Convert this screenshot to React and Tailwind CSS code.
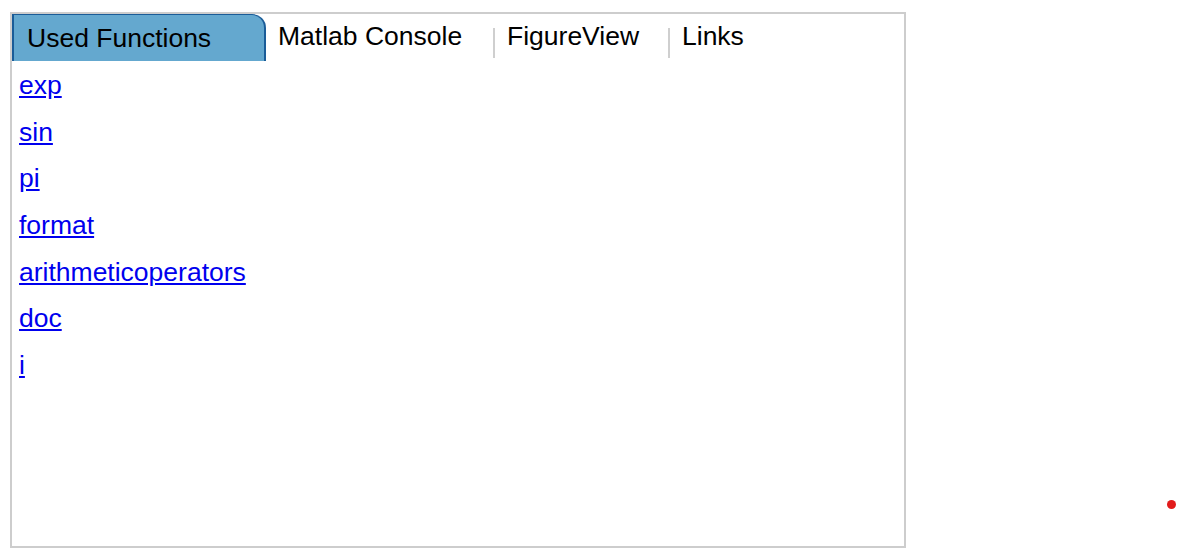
import React from "react";

const links = ["exp", "sin", "pi", "format", "arithmeticoperators", "doc", "i"];

export default function App() {
  return (
    <div
      className="relative w-[1177px] h-[551px] bg-white pl-[10px] pt-[12px]"
      style={{ fontFamily: '"Liberation Sans", Arial, sans-serif' }}
    >
      <div className="w-[896px] h-[536px] border-2 border-[#cdcdcd] flex flex-col">
        <div className="flex items-stretch h-[47px] text-[26.5px] text-black">
          <div className="w-[254px] bg-[#64a8cf] border-l-2 border-r-2 border-t border-[#1a5c98] rounded-tr-[14px] pl-[13px] pt-[2px] flex items-center">
            Used Functions
          </div>
          <div className="w-[227px] pl-[12px] flex items-center pb-[1px]">Matlab Console</div>
          <div className="flex items-center pt-[13px] pb-[2px]">
            <div className="w-[2px] h-[30px] bg-[#cfcfcf]" />
          </div>
          <div className="w-[173px] pl-[12px] flex items-center pb-[1px]">FigureView</div>
          <div className="flex items-center pt-[13px] pb-[2px]">
            <div className="w-[2px] h-[30px] bg-[#cfcfcf]" />
          </div>
          <div className="pl-[12px] flex items-center pb-[1px]">Links</div>
        </div>
        <div className="flex flex-col items-start pl-[7px] pt-[1px] text-[26.5px] leading-[46.67px]">
          {links.map((l) => (
            <a key={l} href="#" className="text-[#0000ee] underline">
              {l}
            </a>
          ))}
        </div>
      </div>
      <div className="absolute left-[1167px] top-[500px] w-[9px] h-[9px] rounded-full bg-[#e21b1b]" />
    </div>
  );
}
